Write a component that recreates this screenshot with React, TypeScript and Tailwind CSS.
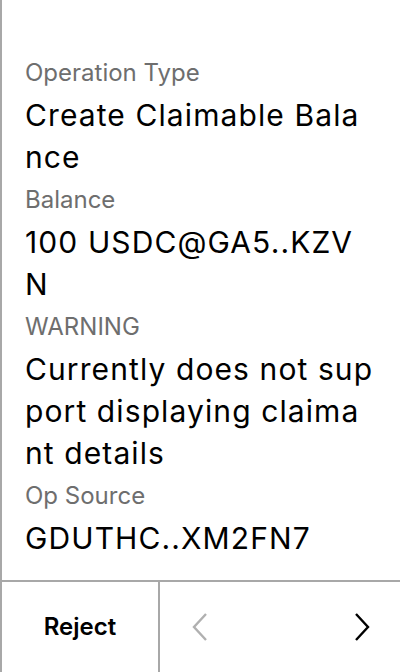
// values are pre-wrapped the way the device breaks them (per character)
const rows = [
  { tag: "Operation Type", lines: ["Create Claimable Bala", "nce"] },
  { tag: "Balance", lines: ["100 USDC@GA5..KZV", "N"] },
  { tag: "WARNING", lines: ["Currently does not sup", "port displaying claima", "nt details"] },
  { tag: "Op Source", lines: ["GDUTHC..XM2FN7"] },
];

const Chevron = ({ dir, color }: { dir: "left" | "right"; color: string }) => (
  <svg width="16" height="28" viewBox="0 0 16 28" fill="none">
    <path
      d={dir === "left" ? "M14 1 L2 14 L14 27" : "M2 1 L14 14 L2 27"}
      stroke={color}
      strokeWidth="2.4"
    />
  </svg>
);

export default function App() {
  return (
    <div
      className="w-[400px] h-[672px] bg-white flex flex-col border-l-2 border-[#a8a8a8] text-black"
      style={{ fontFamily: "Inter, 'Noto Sans', sans-serif" }}
    >
      {/* tag / value list */}
      <div className="flex-1 pt-[58px] pl-[23px] pr-[20px] flex flex-col gap-[7px]">
        {rows.map((r) => (
          <div key={r.tag} className="flex flex-col gap-[6px]">
            <div className="text-[24px] leading-[30px] text-[#6e6e6e]">{r.tag}</div>
            <div className="text-[30px] leading-[42px] tracking-[1.1px]">
              {r.lines.map((l) => (
                <div key={l} className="whitespace-nowrap">{l}</div>
              ))}
            </div>
          </div>
        ))}
      </div>

      {/* footer */}
      <div className="h-[92px] border-t-2 border-[#a8a8a8] flex">
        <div className="w-[158px] border-r-2 border-[#a8a8a8] flex items-center justify-center text-[24px] font-semibold">
          Reject
        </div>
        <div className="flex-1 flex items-center justify-between pl-[32px] pr-[30px]">
          <Chevron dir="left" color="#b0b0b0" />
          <Chevron dir="right" color="#000" />
        </div>
      </div>
    </div>
  );
}
